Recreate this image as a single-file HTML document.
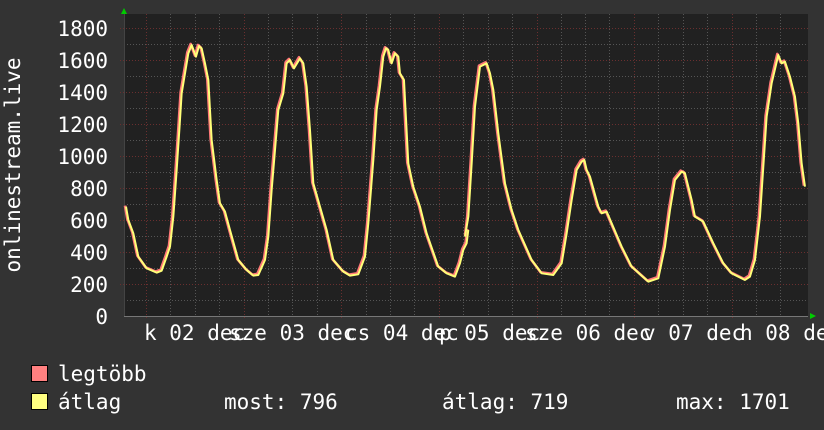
<!DOCTYPE html>
<html><head><meta charset="utf-8"><style>
html,body{margin:0;padding:0;background:#333;}
svg{display:block}
text{font-family:"DejaVu Sans Mono","Liberation Mono",monospace;font-size:21px;fill:#fff}
</style></head><body>
<svg width="824" height="430" xmlns="http://www.w3.org/2000/svg">
<rect width="824" height="430" fill="#333"/>
<rect x="124" y="14" width="684" height="302" fill="#212121"/>
<g stroke="#555" stroke-width="1" stroke-dasharray="1,2">
<line x1="124" x2="808" y1="300.5" y2="300.5"/><line x1="124" x2="808" y1="268.5" y2="268.5"/><line x1="124" x2="808" y1="236.5" y2="236.5"/><line x1="124" x2="808" y1="204.5" y2="204.5"/><line x1="124" x2="808" y1="172.5" y2="172.5"/><line x1="124" x2="808" y1="140.5" y2="140.5"/><line x1="124" x2="808" y1="108.5" y2="108.5"/><line x1="124" x2="808" y1="76.5" y2="76.5"/><line x1="124" x2="808" y1="44.5" y2="44.5"/>
<line y1="14" y2="316" x1="170.5" x2="170.5"/><line y1="14" y2="316" x1="195.5" x2="195.5"/><line y1="14" y2="316" x1="219.5" x2="219.5"/>
<line y1="14" y2="316" x1="268.5" x2="268.5"/><line y1="14" y2="316" x1="292.5" x2="292.5"/><line y1="14" y2="316" x1="317.5" x2="317.5"/>
<line y1="14" y2="316" x1="366.5" x2="366.5"/><line y1="14" y2="316" x1="390.5" x2="390.5"/><line y1="14" y2="316" x1="414.5" x2="414.5"/>
<line y1="14" y2="316" x1="463.5" x2="463.5"/><line y1="14" y2="316" x1="488.5" x2="488.5"/><line y1="14" y2="316" x1="512.5" x2="512.5"/>
<line y1="14" y2="316" x1="561.5" x2="561.5"/><line y1="14" y2="316" x1="585.5" x2="585.5"/><line y1="14" y2="316" x1="609.5" x2="609.5"/>
<line y1="14" y2="316" x1="658.5" x2="658.5"/><line y1="14" y2="316" x1="683.5" x2="683.5"/><line y1="14" y2="316" x1="707.5" x2="707.5"/>
<line y1="14" y2="316" x1="756.5" x2="756.5"/><line y1="14" y2="316" x1="780.5" x2="780.5"/>
</g>
<g stroke="#6a2f2f" stroke-width="1" stroke-dasharray="1,2">
<line x1="120" x2="808" y1="284.5" y2="284.5"/><line x1="120" x2="808" y1="252.5" y2="252.5"/><line x1="120" x2="808" y1="220.5" y2="220.5"/><line x1="120" x2="808" y1="188.5" y2="188.5"/><line x1="120" x2="808" y1="156.5" y2="156.5"/><line x1="120" x2="808" y1="124.5" y2="124.5"/><line x1="120" x2="808" y1="92.5" y2="92.5"/><line x1="120" x2="808" y1="60.5" y2="60.5"/><line x1="120" x2="808" y1="28.5" y2="28.5"/>
<line y1="14" y2="319" x1="146.5" x2="146.5"/><line y1="14" y2="319" x1="244.5" x2="244.5"/><line y1="14" y2="319" x1="341.5" x2="341.5"/><line y1="14" y2="319" x1="439.5" x2="439.5"/><line y1="14" y2="319" x1="537.5" x2="537.5"/><line y1="14" y2="319" x1="634.5" x2="634.5"/><line y1="14" y2="319" x1="732.5" x2="732.5"/>
</g>
<line x1="124" x2="808" y1="316.5" y2="316.5" stroke="#777"/>
<line x1="124.5" x2="124.5" y1="14" y2="316" stroke="#444"/>
<polygon points="121,14 124,8 127,14" fill="#0c0"/>
<polygon points="810,313 816,316 810,319" fill="#0c0"/>
<g fill="none" stroke-linejoin="round">
<g transform="translate(119,29) scale(0.3333)"><polyline stroke="#ff7878" stroke-width="8" points="18,530 25,570 40,610 55,680 80,715 110,728 125,722 140,680 150,650 160,560 170,420 178,300 185,190 195,130 205,70 215,45 228,80 237,48 245,55 255,100 265,150 275,330 290,450 300,520 315,545 330,600 355,690 380,720 400,737 415,735 435,690 445,620 455,480 465,360 475,240 490,190 500,100 510,90 522,115 540,85 550,100 560,170 570,300 580,460 600,530 620,600 640,690 670,725 690,737 715,733 735,680 745,580 760,390 770,240 780,170 790,80 798,55 805,60 815,100 825,70 835,80 840,130 852,150 865,400 880,470 900,530 920,610 955,710 980,730 1005,740 1020,700 1030,660 1040,640 1045,600"/></g>
<g transform="translate(464,29) scale(0.3333)"><polyline stroke="#ff7878" stroke-width="8" points="3,620 10,560 20,400 30,230 45,110 55,105 65,100 75,130 85,180 100,310 120,460 140,540 160,600 200,690 230,730 265,735 290,700 305,610 320,510 335,420 350,395 358,390 365,420 375,440 400,530 410,550 425,545 440,580 470,650 500,710 550,755 580,745 600,650 615,540 630,450 650,425 660,430 680,510 690,560 715,575 745,640 775,700 800,730 840,750 855,740 870,690 885,560 895,410 905,260 920,160 940,75 950,100 960,95 975,140 990,200 1000,280 1010,400 1020,470"/></g>
<g transform="translate(120,30) scale(0.3333)"><polyline stroke="#ffff78" stroke-width="6" points="18,530 25,570 40,610 55,680 80,715 110,728 125,722 140,680 150,650 160,560 170,420 178,300 185,190 195,130 205,70 215,45 228,80 237,48 245,55 255,100 265,150 275,330 290,450 300,520 315,545 330,600 355,690 380,720 400,737 415,735 435,690 445,620 455,480 465,360 475,240 490,190 500,100 510,90 522,115 540,85 550,100 560,170 570,300 580,460 600,530 620,600 640,690 670,725 690,737 715,733 735,680 745,580 760,390 770,240 780,170 790,80 798,55 805,60 815,100 825,70 835,80 840,130 852,150 865,400 880,470 900,530 920,610 955,710 980,730 1005,740 1020,700 1030,660 1040,640 1045,600"/></g>
<g transform="translate(465,30) scale(0.3333)"><polyline stroke="#ffff78" stroke-width="6" points="0,620 10,560 20,400 30,230 45,110 55,105 65,100 75,130 85,180 100,310 120,460 140,540 160,600 200,690 230,730 265,735 290,700 305,610 320,510 335,420 350,395 358,390 365,420 375,440 400,530 410,550 425,545 440,580 470,650 500,710 550,755 580,745 600,650 615,540 630,450 650,425 660,430 680,510 690,560 715,575 745,640 775,700 800,730 840,750 855,740 870,690 885,560 895,410 905,260 920,160 940,75 950,100 960,95 975,140 990,200 1000,280 1010,400 1020,470"/></g>
</g>
<g text-anchor="end">
<text x="108" y="324">0</text><text x="108" y="292">200</text><text x="108" y="260">400</text><text x="108" y="228">600</text><text x="108" y="196">800</text><text x="108" y="164">1000</text><text x="108" y="132">1200</text><text x="108" y="100">1400</text><text x="108" y="68">1600</text><text x="108" y="36">1800</text>
</g>
<text transform="translate(20,165) rotate(-90)" text-anchor="middle">onlinestream.live</text>
<g>
<text x="144" y="340">k 02 dec</text>
<text x="229" y="340">sze 03 dec</text>
<text x="345" y="340">cs 04 dec</text>
<text x="439" y="340">p 05 dec</text>
<text x="525" y="340">sze 06 dec</text>
<text x="643" y="340">v 07 dec</text>
<text x="740" y="340">h 08 dec</text>
</g>
<rect x="31.5" y="365.5" width="16" height="16" fill="#ff8080" stroke="#000"/>
<rect x="31.5" y="393.5" width="16" height="16" fill="#ffff80" stroke="#000"/>
<text x="58" y="381">legtöbb</text>
<text x="58" y="409">átlag</text>
<text x="224" y="409">most: 796</text>
<text x="442" y="409">átlag: 719</text>
<text x="676" y="409">max: 1701</text>
</svg>
</body></html>
